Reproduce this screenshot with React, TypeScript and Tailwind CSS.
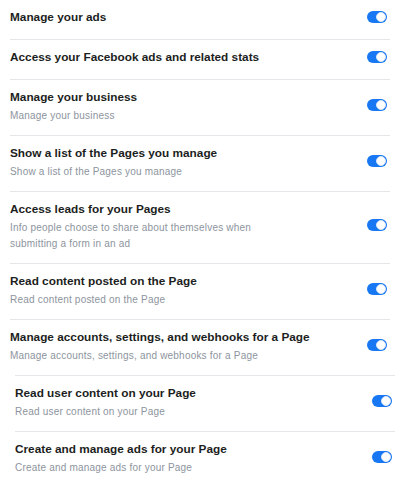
import React from "react";

type Item = { title: string; sub?: string };

const main: Item[] = [
  { title: "Manage your ads" },
  { title: "Access your Facebook ads and related stats" },
  { title: "Manage your business", sub: "Manage your business" },
  { title: "Show a list of the Pages you manage", sub: "Show a list of the Pages you manage" },
  {
    title: "Access leads for your Pages",
    sub: "Info people choose to share about themselves when submitting a form in an ad",
  },
  { title: "Read content posted on the Page", sub: "Read content posted on the Page" },
  {
    title: "Manage accounts, settings, and webhooks for a Page",
    sub: "Manage accounts, settings, and webhooks for a Page",
  },
];

const nested: Item[] = [
  { title: "Read user content on your Page", sub: "Read user content on your Page" },
  { title: "Create and manage ads for your Page", sub: "Create and manage ads for your Page" },
];

function Toggle() {
  return (
    <div className="relative w-[20px] h-[12px] rounded-full bg-[#1877f2] shrink-0">
      <div className="absolute right-[1px] top-[1px] w-[10px] h-[10px] rounded-full bg-white border border-[#d6e4f7]" />
    </div>
  );
}

function Row({ item, border }: { item: Item; border: "t" | "b" | "none" }) {
  const b = border === "t" ? "border-t" : border === "b" ? "border-b" : "";
  return (
    <div
      className={
        "flex items-center justify-between pt-[6px] pb-[11px] pr-[3px] border-[#e4e6e9] " + b
      }
    >
      <div className="flex flex-col">
        <div className="text-[11.8px] leading-[22px] font-bold text-[#1c1e21] whitespace-nowrap">
          {item.title}
        </div>
        {item.sub && (
          <div className="text-[10px] leading-[16px] text-[#8d949e] max-w-[262px] tracking-[0.2px]">
            {item.sub}
          </div>
        )}
      </div>
      <Toggle />
    </div>
  );
}

export default function App() {
  return (
    <div
      className="w-[414px] h-[481px] overflow-hidden bg-white px-[10px]"
      style={{ fontFamily: "'Liberation Sans', Arial, sans-serif" }}
    >
      <div className="w-[380px]">
        {main.map((it, i) => (
          <Row key={i} item={it} border={i === main.length - 1 ? "none" : "b"} />
        ))}
        <div className="ml-[5px] w-[380px]">
          {nested.map((it, i) => (
            <Row key={i} item={it} border="t" />
          ))}
        </div>
      </div>
    </div>
  );
}
